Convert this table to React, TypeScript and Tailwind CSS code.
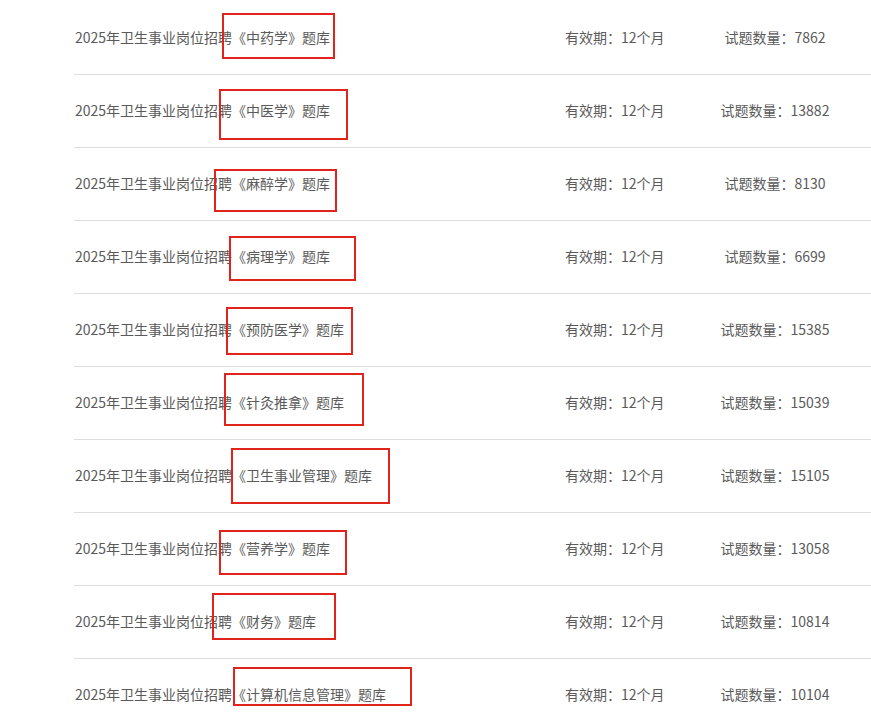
const rows = [
  { name: "中药学", count: 7862 },
  { name: "中医学", count: 13882 },
  { name: "麻醉学", count: 8130 },
  { name: "病理学", count: 6699 },
  { name: "预防医学", count: 15385 },
  { name: "针灸推拿", count: 15039 },
  { name: "卫生事业管理", count: 15105 },
  { name: "营养学", count: 13058 },
  { name: "财务", count: 10814 },
  { name: "计算机信息管理", count: 10104 },
]

// red annotation boxes drawn over the titles
const marks = [
  "left-[222px] top-[13px] w-[113px] h-[46px]",
  "left-[219px] top-[89px] w-[129px] h-[51px]",
  "left-[214px] top-[169px] w-[123px] h-[43px]",
  "left-[229px] top-[236px] w-[127px] h-[45px]",
  "left-[226px] top-[307px] w-[127px] h-[48px]",
  "left-[224px] top-[373px] w-[140px] h-[53px]",
  "left-[231px] top-[448px] w-[159px] h-[56px]",
  "left-[219px] top-[530px] w-[128px] h-[45px]",
  "left-[212px] top-[593px] w-[124px] h-[47px]",
  "left-[233px] top-[667px] w-[179px] h-[39px]",
]

export default function App() {
  return (
    <div
      className="relative h-[717px] w-[871px] overflow-hidden bg-white text-[14px] text-[#5a5a5a]"
      style={{ fontFamily: '"Noto Sans CJK SC", "Noto Sans", sans-serif' }}
    >
      <div className="pl-[74px] pt-[2px]">
        {rows.map((r) => (
          <div key={r.name} className="flex h-[73px] items-center border-b border-[#ddd] pr-[36px] pb-[2px]">
            <div className="flex-1 pl-px">
              2025年卫生事业岗位招聘《{r.name}》题库
            </div>
            <div className="w-[150px]">有效期：12个月</div>
            <div className="w-[120px] text-center">试题数量：{r.count}</div>
          </div>
        ))}
      </div>
      {marks.map((m) => (
        <div key={m} className={`absolute border-2 border-[#e0241c] ${m}`} />
      ))}
    </div>
  )
}
